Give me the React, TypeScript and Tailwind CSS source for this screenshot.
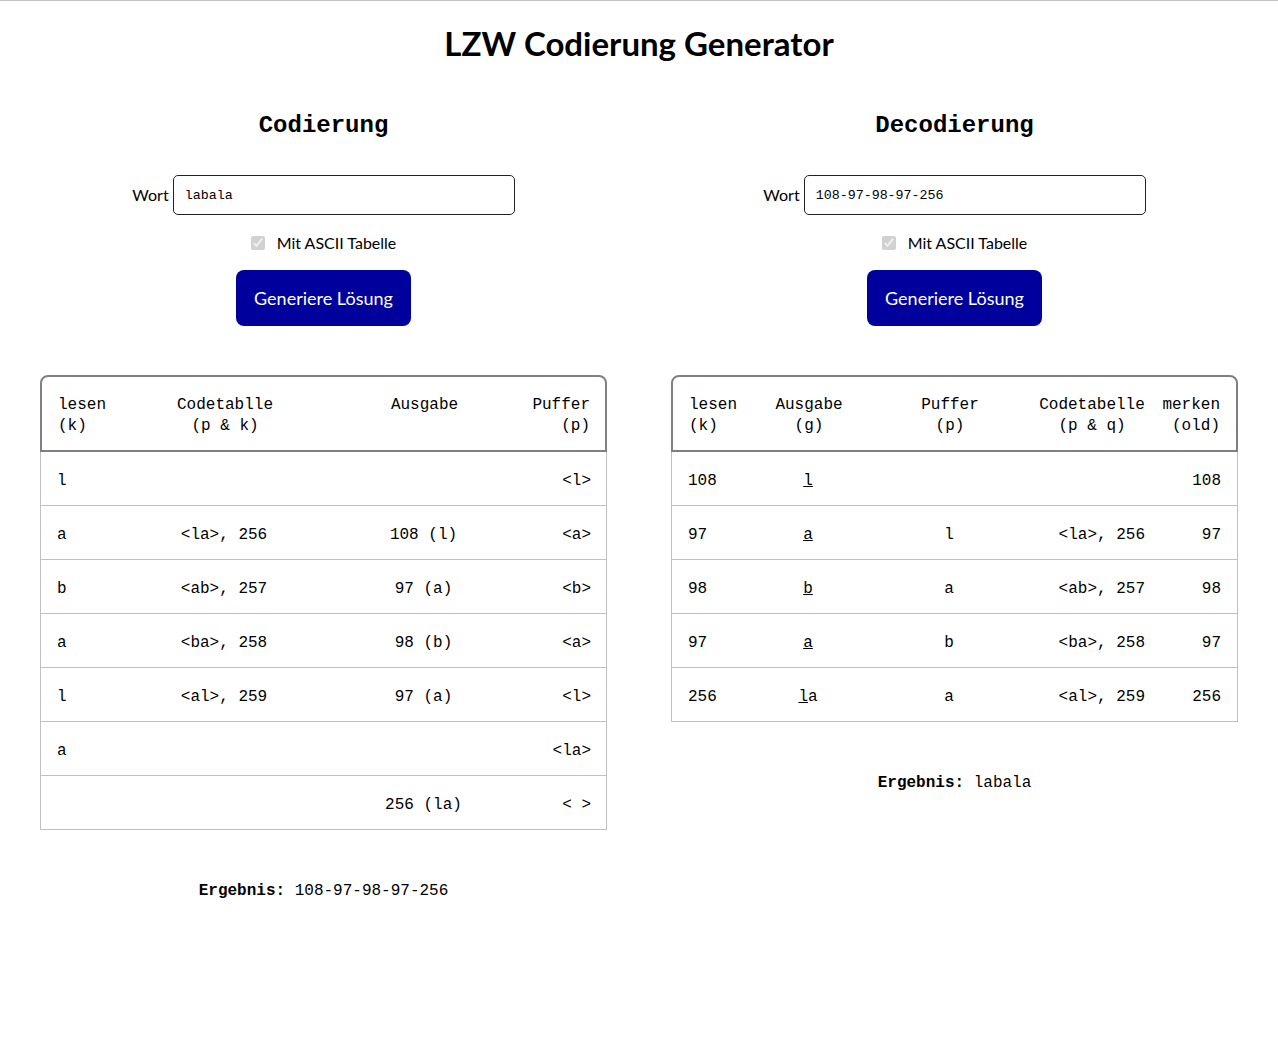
import React from 'react';

const sans = "font-['Lato','Noto_Sans',sans-serif]";
const mono = "font-['Liberation_Mono','DejaVu_Sans_Mono',monospace]";

type Cell = React.ReactNode;

const encodeRows: Cell[][] = [
  ['l', '', '', '<l>'],
  ['a', '<la>, 256', '108 (l)', '<a>'],
  ['b', '<ab>, 257', '97 (a)', '<b>'],
  ['a', '<ba>, 258', '98 (b)', '<a>'],
  ['l', '<al>, 259', '97 (a)', '<l>'],
  ['a', '', '', '<la>'],
  ['', '', '256 (la)', '< >'],
];

const decodeRows: Cell[][] = [
  ['108', <u key="u">l</u>, '', '', '108'],
  ['97', <u key="u">a</u>, 'l', '<la>, 256', '97'],
  ['98', <u key="u">b</u>, 'a', '<ab>, 257', '98'],
  ['97', <u key="u">a</u>, 'b', '<ba>, 258', '97'],
  ['256', <span key="u"><u>l</u>a</span>, 'a', '<al>, 259', '256'],
];

function Controls({ title, value }: { title: string; value: string }) {
  return (
    <div className="flex flex-col items-center">
      <h2 className={`${mono} text-[24px] leading-[32px] font-bold mt-[45px]`}>{title}</h2>
      <div className="flex items-center gap-[4px] mt-[33px]">
        <label className={`${sans} text-[16px]`}>Wort</label>
        <input
          readOnly
          value={value}
          className={`${mono} w-[342px] h-[40px] border border-[#222] rounded-[5px] px-[11px] text-[13.33px] outline-none`}
        />
      </div>
      <div className="flex items-center gap-[12px] mt-[16px] h-[24px]">
        <input type="checkbox" checked disabled readOnly className="w-[14px] h-[14px]" />
        <span className={`${sans} text-[16px]`}>Mit ASCII Tabelle</span>
      </div>
      <button
        className={`${sans} mt-[15px] w-[175px] h-[56px] rounded-[8px] bg-[#00009c] text-white text-[18px]`}
      >
        Generiere Lösung
      </button>
    </div>
  );
}

function LzwTable({
  cols,
  aligns,
  head,
  rows,
}: {
  cols: string;
  aligns: string[];
  head: Cell[];
  rows: Cell[][];
}) {
  return (
    <div className={`${mono} text-[16px] leading-[21px] mt-[49px] w-[567px]`}>
      <div className={`grid ${cols} border-2 border-[#808080] rounded-t-[8px] pt-[18px] pb-[12px] h-[77px]`}>
        {head.map((h, i) => (
          <div key={i} className={`${aligns[i]} whitespace-nowrap`}>{h}</div>
        ))}
      </div>
      {rows.map((r, ri) => (
        <div key={ri} className={`grid ${cols} h-[54px] pt-[6px] border-x border-b border-[#c0c0c0] items-center`}>
          {r.map((c, i) => (
            <div key={i} className={`${aligns[i]} whitespace-pre`}>{c}</div>
          ))}
        </div>
      ))}
    </div>
  );
}

export default function App() {
  return (
    <div className="w-[1278px] min-h-[1038px] bg-white text-black border-t border-[#c4c4c4]">
      <h1 className={`${sans} text-[33px] leading-[44px] font-bold text-center pt-[20px]`}>
        LZW Codierung Generator
      </h1>
      <div className="flex gap-[64px] px-[40px]">
        <div className="w-[567px] flex flex-col items-center">
          <Controls title="Codierung" value="labala" />
          <LzwTable
            cols="grid-cols-[80px_206px_193px_1fr]"
            aligns={['text-left pl-[16px]', 'text-center', 'text-center', 'text-right pr-[15px]']}
            head={[
              <>lesen<br />(k)</>,
              <>Codetablle<br />(p &amp; k)</>,
              'Ausgabe',
              <>Puffer<br />(p)</>,
            ]}
            rows={encodeRows}
          />
          <p className={`${mono} text-[16px] leading-[24px] mt-[49px]`}>
            <b>Ergebnis:</b> 108-97-98-97-256
          </p>
        </div>
        <div className="w-[567px] flex flex-col items-center">
          <Controls title="Decodierung" value="108-97-98-97-256" />
          <LzwTable
            cols="grid-cols-[88px_96px_186px_103px_1fr]"
            aligns={['text-left pl-[16px]', 'text-center', 'text-center', 'text-right', 'text-right pr-[16px]']}
            head={[
              <>lesen<br />(k)</>,
              <>Ausgabe<br />(<u>g</u>)</>,
              <>Puffer<br />(p)</>,
              <div className="flex justify-center mr-[5px]">
                <div className="text-center">Codetabelle<br />(p &amp; q)</div>
              </div>,
              <>merken<br />(old)</>,
            ]}
            rows={decodeRows}
          />
          <p className={`${mono} text-[16px] leading-[24px] mt-[49px]`}>
            <b>Ergebnis:</b> labala
          </p>
        </div>
      </div>
    </div>
  );
}
